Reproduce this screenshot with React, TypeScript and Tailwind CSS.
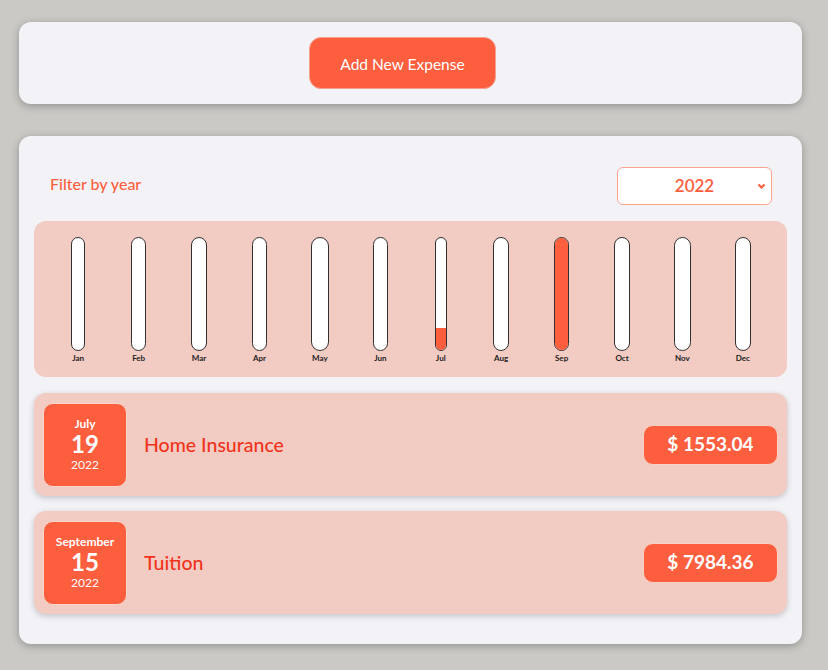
import React from "react";

const months = ["Jan","Feb","Mar","Apr","May","Jun","Jul","Aug","Sep","Oct","Nov","Dec"];
const fills: Record<string, number> = { Jul: 19.5, Sep: 100 };

const expenses = [
  { month: "July", day: "19", year: "2022", title: "Home Insurance", amount: "$ 1553.04" },
  { month: "September", day: "15", year: "2022", title: "Tuition", amount: "$ 7984.36" },
];

export default function App() {
  return (
    <div className="min-h-[670px] w-[828px] bg-[#cac9c6] pt-[22px] pl-[19px] pr-[26px] pb-[26px]" style={{ fontFamily: "Lato, 'Open Sans', sans-serif" }}>
      <div className="h-[82px] rounded-[12px] bg-[#f2f2f7] shadow-[0_2px_8px_rgba(0,0,0,0.28)] flex items-center justify-center pr-[16px]">
        <button className="w-[187px] h-[52px] rounded-[12px] bg-[#fd5e3e] text-white text-[15.5px] border border-[#f6a08f] pt-[3px]">
          Add New Expense
        </button>
      </div>

      <div className="mt-[32px] rounded-[12px] bg-[#f2f2f7] shadow-[0_2px_8px_rgba(0,0,0,0.28)] px-[15px] pt-[31px] pb-[30px]">
        <div className="flex items-center justify-between pl-[16px] pr-[15px] h-[38px]">
          <span className="text-[16px] text-[#fd5e3e] font-medium -mt-[4px]">Filter by year</span>
          <div className="relative w-[155px] h-[38px] rounded-[6px] border border-[#f9a28f] bg-white flex items-center justify-center">
            <span className="text-[17px] text-[#fd5e3e] font-semibold">2022</span>
            <svg className="absolute right-[5px] top-[15px]" width="9" height="7" viewBox="0 0 9 7">
              <path d="M1.5 1.5 L4.5 4.5 L7.5 1.5" stroke="#fd5e3e" strokeWidth="2.2" fill="none" />
            </svg>
          </div>
        </div>

        <div className="mt-[16px] h-[156px] rounded-[12px] bg-[#f2cbc3] flex px-[14px] pt-[16px] pb-[12px]">
          {months.map((m) => (
            <div key={m} className="flex-1 flex flex-col items-center h-full">
              <div className="h-full flex flex-col items-center">
                <div className="relative flex-1 w-full min-w-[10px] border border-[#313131] rounded-[12px] bg-white overflow-hidden flex flex-col justify-end">
                  <div className="bg-[#fd5e3e] w-full" style={{ height: `${fills[m] ?? 0}%` }} />
                </div>
                <div className="text-[8px] font-bold text-[#222] leading-[14px] px-[1px]">{m}</div>
              </div>
            </div>
          ))}
        </div>

        <div className="mt-[16px] flex flex-col gap-[15px]">
          {expenses.map((e) => (
            <div key={e.title} className="h-[103px] rounded-[12px] bg-[#f2cbc3] shadow-[0_2px_6px_rgba(0,0,0,0.2)] flex items-center pl-[9px] pr-[9px]">
              <div className="w-[84px] h-[84px] rounded-[10px] bg-[#fd5e3e] border border-[#f8d6cd] text-white flex flex-col items-center justify-center">
                <div className="text-[12px] font-bold leading-[15px]">{e.month}</div>
                <div className="text-[24px] font-bold leading-[25px]">{e.day}</div>
                <div className="text-[12px] leading-[17px]">{e.year}</div>
              </div>
              <div className="ml-[17px] flex-1 text-[19.5px] text-[#f0331a] font-medium">{e.title}</div>
              <div className="w-[135px] h-[40px] rounded-[10px] bg-[#fd5e3e] border border-[#fbd0c5] text-white text-[19px] font-bold flex items-center justify-center">
                {e.amount}
              </div>
            </div>
          ))}
        </div>
      </div>
    </div>
  );
}
